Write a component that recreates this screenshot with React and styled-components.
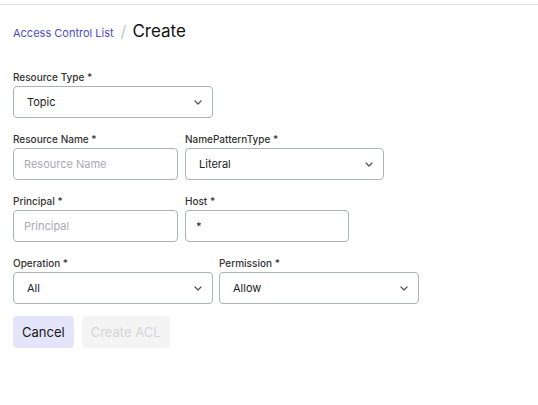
import React from "react";
import styled, { createGlobalStyle } from "styled-components";

const GlobalStyle = createGlobalStyle`
  body {
    margin: 0;
    background: #fff;
    font-family: Inter, "Noto Sans", sans-serif;
  }
`;

const Page = styled.div`
  border-top: 4px solid #fff;
`;

const TopBar = styled.div`
  border-top: 1px solid #e4e4e7;
`;

const Content = styled.div`
  padding: 0 13px;
`;

const Breadcrumb = styled.div`
  display: flex;
  align-items: baseline;
  height: 30px;
  padding-top: 16px;
  margin-bottom: 36px;
  box-sizing: border-box;
  a {
    font-size: 11px;
    color: #4c4cbf;
    text-decoration: none;
  }
  .sep {
    color: #c4c4cc;
    font-size: 16px;
    margin: 0 6px 0 7px;
  }
  h1 {
    margin: 0;
    font-size: 17px;
    font-weight: 400;
    color: #111;
  }
`;

const Form = styled.form`
  display: flex;
  flex-direction: column;
  gap: 15px;
`;

const Row = styled.div`
  display: flex;
  gap: ${(p) => p.$gap || 7}px;
`;

const Field = styled.div`
  display: flex;
  flex-direction: column;
  width: ${(p) => p.$w}px;
`;

const Label = styled.label`
  font-size: 10px;
  line-height: 12px;
  font-weight: 500;
  color: #333;
  margin-bottom: 3px;
`;

const Input = styled.input`
  box-sizing: border-box;
  height: 32px;
  width: 100%;
  border: 1px solid #aab2ba;
  border-radius: 4px;
  padding: 0 10px;
  font-family: Inter, sans-serif;
  font-size: 11px;
  color: #222;
  outline: none;
  &::placeholder {
    color: #a9a9b2;
  }
`;

const Select = styled.div`
  box-sizing: border-box;
  height: 32px;
  width: 100%;
  border: 1px solid #aab2ba;
  border-radius: 4px;
  padding: 0 8px 0 13px;
  display: flex;
  align-items: center;
  justify-content: space-between;
  font-size: 11px;
  color: #222;
  svg {
    width: 10px;
    height: 10px;
    margin-right: 1px;
  }
`;

const Actions = styled.div`
  display: flex;
  gap: 8px;
  margin-top: -3px;
`;

const Button = styled.button`
  height: 32px;
  border: none;
  border-radius: 4px;
  padding: 0 9px;
  font-family: Inter, sans-serif;
  font-size: 13px;
  background: ${(p) => (p.$disabled ? "#f4f4f5" : "#e4e5fb")};
  color: ${(p) => (p.$disabled ? "#d4d4d8" : "#171717")};
  cursor: ${(p) => (p.$disabled ? "default" : "pointer")};
`;

const Chevron = () => (
  <svg viewBox="0 0 10 10" fill="none">
    <path d="M2 4l3 3 3-3" stroke="#555" strokeWidth="1.3" strokeLinecap="round" strokeLinejoin="round" />
  </svg>
);

const SelectField = ({ label, value, w }) => (
  <Field $w={w}>
    <Label>{label}</Label>
    <Select>
      <span>{value}</span>
      <Chevron />
    </Select>
  </Field>
);

const InputField = ({ label, placeholder, value, w }) => (
  <Field $w={w}>
    <Label>{label}</Label>
    <Input placeholder={placeholder} defaultValue={value} />
  </Field>
);

export default function App() {
  return (
    <Page>
      <GlobalStyle />
      <TopBar />
      <Content>
        <Breadcrumb>
          <a href="#">Access Control List</a>
          <span className="sep">/</span>
          <h1>Create</h1>
        </Breadcrumb>
        <Form onSubmit={(e) => e.preventDefault()}>
          <Row>
            <SelectField label="Resource Type *" value="Topic" w={200} />
          </Row>
          <Row>
            <InputField label="Resource Name *" placeholder="Resource Name" w={165} />
            <SelectField label="NamePatternType *" value="Literal" w={199} />
          </Row>
          <Row>
            <InputField label="Principal *" placeholder="Principal" w={165} />
            <InputField label="Host *" value="*" w={164} />
          </Row>
          <Row $gap={6}>
            <SelectField label="Operation *" value="All" w={200} />
            <SelectField label="Permission *" value="Allow" w={200} />
          </Row>
          <Actions>
            <Button type="button">Cancel</Button>
            <Button type="button" $disabled>
              Create ACL
            </Button>
          </Actions>
        </Form>
      </Content>
    </Page>
  );
}
